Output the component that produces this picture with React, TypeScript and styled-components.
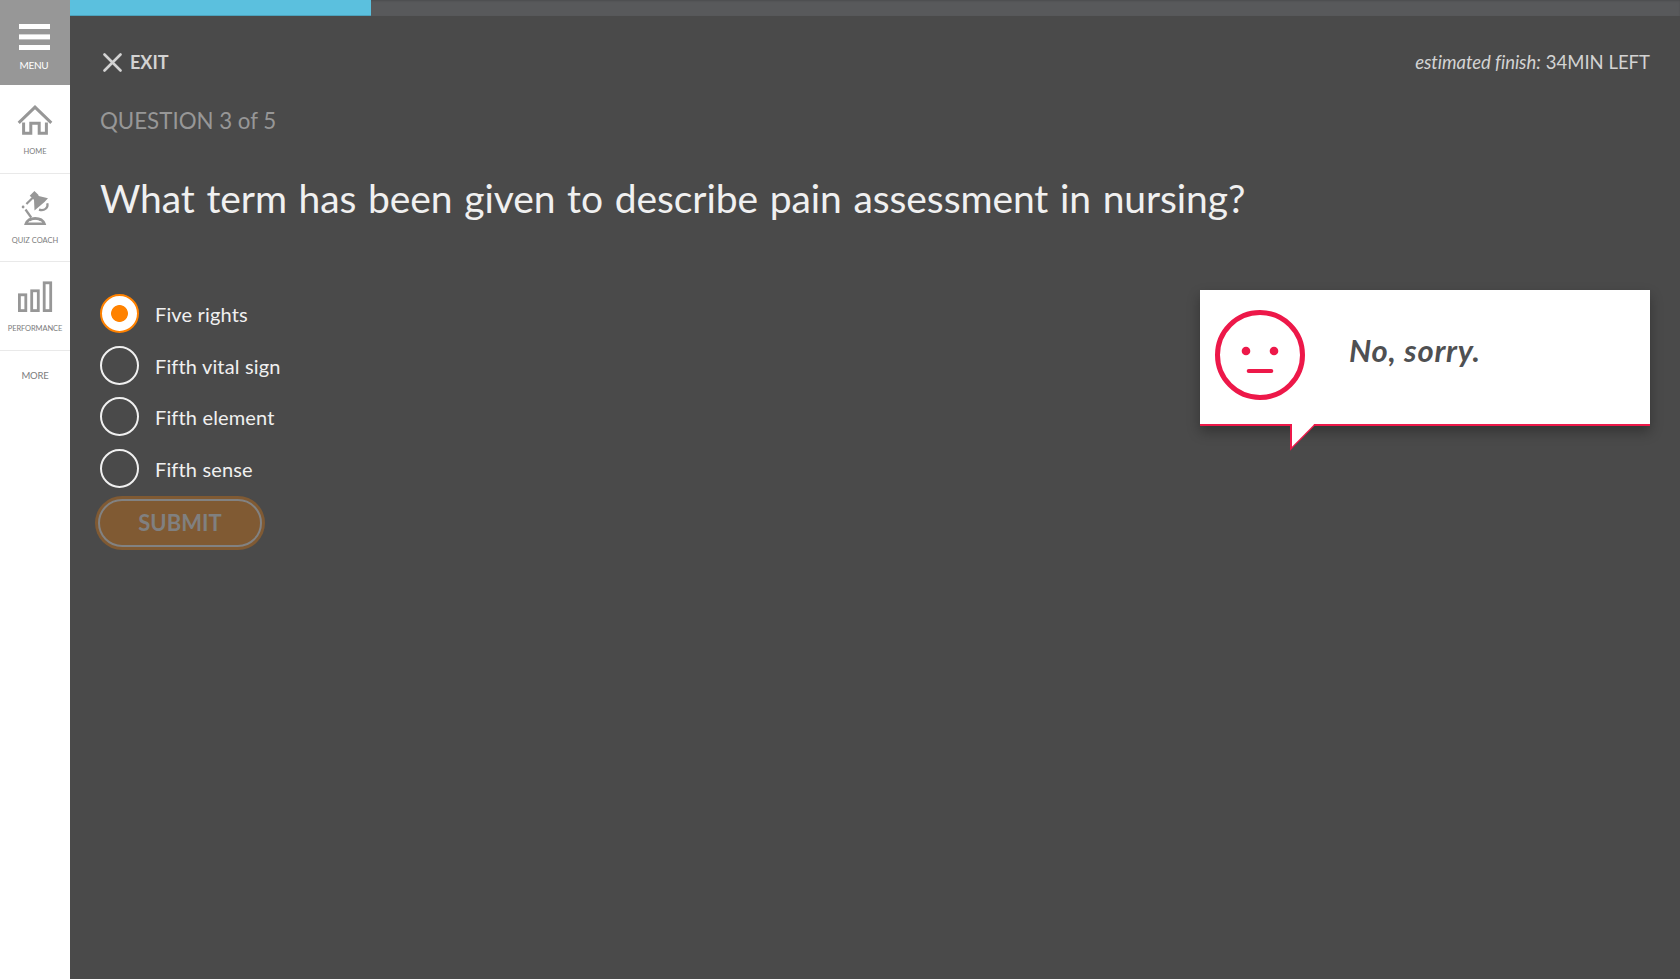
import React, { useState } from 'react';
import styled, { createGlobalStyle } from 'styled-components';

const colors = {
  page: '#4a4a4a',
  grey: '#979797',
  accent: '#ff8200',
  error: '#ed1849',
};

const GlobalStyle = createGlobalStyle`
  *, *::before, *::after { box-sizing: border-box; }
  body {
    margin: 0;
    background: ${colors.page};
    font-family: Lato, "Open Sans", sans-serif;
  }
`;

const Page = styled.div`
  display: flex;
  height: 979px;
  overflow: hidden;
`;

const Sidebar = styled.nav`
  flex: 0 0 70px;
  display: flex;
  flex-direction: column;
  background: #fff;
  color: ${colors.grey};
`;

const MenuButton = styled.button`
  display: flex;
  flex-direction: column;
  align-items: center;
  height: 85px;
  padding: 24px 2px 0 0;
  border: 0;
  background: ${colors.grey};
  color: #fff;
  font: 400 10px/14px Lato, sans-serif;
  letter-spacing: -0.3px;
`;

const Hamburger = styled.svg`
  width: 31px;
  height: 26px;
  margin: 0 0 8px 1px;
`;

const NavItem = styled.a<{ $height: number; $top: number }>`
  display: flex;
  flex-direction: column;
  align-items: center;
  height: ${(p) => p.$height}px;
  padding-top: ${(p) => p.$top}px;
  border-bottom: 1px solid #e9e9e9;
`;

const NavIcon = styled.svg`
  display: block;
  width: 36px;
  flex-shrink: 0;
  fill: none;
  stroke: ${colors.grey};
`;

const NavLabel = styled.span<{ $tight?: boolean }>`
  margin-top: 10px;
  font-size: 7.5px;
  line-height: 10px;
  font-weight: 400;
  white-space: nowrap;
  color: #7c7c7c;
  letter-spacing: ${(p) => (p.$tight ? '-0.1px' : '0')};
`;

const MoreLink = styled.a`
  padding-top: 18px;
  text-align: center;
  font-size: 9.5px;
  line-height: 14px;
  letter-spacing: -0.2px;
  color: #7c7c7c;
`;

const Main = styled.main`
  flex: 1;
  min-width: 0;
  display: flex;
  flex-direction: column;
`;

const Progress = styled.div`
  height: 16px;
  background: #58595b;
  box-shadow: inset 0 1px 2px rgba(0, 0, 0, 0.15);
`;

const ProgressFill = styled.div`
  width: 301px;
  height: 16px;
  background: #5bc0de;
  box-shadow: inset 0 -1px 0 rgba(0, 0, 0, 0.15);
`;

const Content = styled.div`
  padding: 34px 30px 0;
`;

const TopBar = styled.header`
  display: flex;
  justify-content: space-between;
  height: 24px;
  line-height: 24px;
  color: #d3d3d3;
`;

const ExitButton = styled.button`
  display: flex;
  align-items: center;
  gap: 8.5px;
  padding: 0 0 0 2.5px;
  border: 0;
  background: none;
  color: inherit;
  font: 700 18px/24px Lato, sans-serif;
`;

const ExitIcon = styled.svg`
  width: 19px;
  height: 19px;
  fill: none;
  stroke: currentColor;
  stroke-width: 2.6;
  stroke-linecap: round;
`;

const Estimate = styled.div`
  display: flex;
  gap: 5px;
  font-size: 18.5px;
`;

const EstimateLabel = styled.em`
  letter-spacing: -0.05px;
`;

const Counter = styled.div`
  margin-top: 33px;
  font-size: 22.3px;
  line-height: 28px;
  color: ${colors.grey};
`;

const Question = styled.h1`
  margin: 39px 0 0;
  font-size: 39px;
  line-height: 48px;
  font-weight: 400;
  letter-spacing: -0.08px;
  word-spacing: 1.8px;
  color: #f0f0f0;
`;

const Body = styled.div`
  display: flex;
  justify-content: space-between;
  align-items: flex-start;
  margin-top: 68px;
`;

const Form = styled.form`
  padding-top: 4px;
`;

const Options = styled.div`
  display: grid;
  row-gap: 12.67px;
`;

const Option = styled.label`
  display: flex;
  align-items: center;
  gap: 16px;
  height: 39px;
  font-size: 20px;
  line-height: 24px;
  letter-spacing: 0.15px;
  color: #f0f0f0;
`;

const OptionText = styled.span`
  padding-top: 1px;
`;

const Radio = styled.input`
  appearance: none;
  width: 39px;
  height: 39px;
  margin: 0;
  border: 2px solid #f0f0f0;
  border-radius: 50%;

  &:checked {
    border-color: ${colors.accent};
    background: radial-gradient(circle, ${colors.accent} 8px, #fff 8.8px);
  }
`;

const Submit = styled.button`
  display: block;
  width: 164px;
  height: 48px;
  margin: 11px 0 0 -2px;
  padding: 0;
  border: 2px solid #828282;
  border-radius: 24px;
  background: #805a33;
  box-shadow: 0 0 0 3px #805a33;
  color: #808080;
  font: 700 22px/28px Lato, sans-serif;
`;

const Feedback = styled.aside`
  position: relative;
  display: flex;
  align-items: flex-start;
  width: 450px;
  height: 136px;
  padding: 19.5px 15px 0;
  border-bottom: 2px solid ${colors.error};
  background: #fff;
  box-shadow: 0 6px 12px rgba(0, 0, 0, 0.3);
`;

const Face = styled.svg`
  width: 90px;
  height: 90px;
  fill: none;
  stroke: ${colors.error};
`;

const FeedbackText = styled.p`
  margin: 20px 0 0 44px;
  font-size: 31px;
  line-height: 40px;
  font-weight: 700;
  font-style: italic;
  letter-spacing: 0.75px;
  color: #4f5052;
`;

const Tail = styled.svg`
  position: absolute;
  left: 90px;
  top: 134px;
  width: 26px;
  height: 27px;
`;

const answers = ['Five rights', 'Fifth vital sign', 'Fifth element', 'Fifth sense'];

export default function App() {
  const [selected, setSelected] = useState(0);

  return (
    <>
      <GlobalStyle />
      <Page>
        <Sidebar>
          <MenuButton>
            <Hamburger viewBox="0 0 31 26" fill="#fff">
              <rect width="31" height="5" />
              <rect y="10.4" width="31" height="5" />
              <rect y="21" width="31" height="5" />
            </Hamburger>
            MENU
          </MenuButton>
          <NavItem $height={89} $top={20}>
            <NavIcon viewBox="0 0 36 32" height="32" strokeWidth="3">
              <path d="M1.7 17.9 L18 2.2 L34.3 17.9" />
              <path d="M6.6 17.5 V28.2 H13.8 V18.2 H22.2 V28.2 H29.4 V17.5" />
            </NavIcon>
            <NavLabel>HOME</NavLabel>
          </NavItem>
          <NavItem $height={88} $top={16}>
            <NavIcon viewBox="0 0 36 36" height="36" strokeWidth="2.2">
              <path
                d="M12.7 5.7 L17.4 1 L21.3 4.7 L21.7 6 L31 8.3 L27.5 12 L17.5 20.5 L17 10 L15.8 8.4 Z"
                fill={colors.grey}
                stroke="none"
              />
              <path d="M16 7.5 L9.4 14" />
              <circle cx="6.1" cy="17" r="1.4" fill={colors.grey} stroke="none" />
              <path d="M8.5 19.5 L14.2 27.5" />
              <path d="M30.3 13.3 C31.5 17.5 27.5 21.5 22 19.6" />
              <path d="M8.9 33.8 C11.5 26.3 24.8 26.3 27.4 33.8 Z" strokeWidth="2.6" />
              <path d="M12.5 30.8 C15 28.2 21.5 28.2 24 30.8" strokeWidth="1.6" />
            </NavIcon>
            <NavLabel>QUIZ COACH</NavLabel>
          </NavItem>
          <NavItem $height={89} $top={18}>
            <NavIcon viewBox="0 0 36 34" height="34" strokeWidth="2.8">
              <rect x="2.4" y="14.8" width="6.4" height="15.8" />
              <rect x="14.7" y="10.8" width="6.6" height="19.8" />
              <rect x="27.2" y="2.8" width="6.5" height="27.8" />
            </NavIcon>
            <NavLabel $tight>PERFORMANCE</NavLabel>
          </NavItem>
          <MoreLink>MORE</MoreLink>
        </Sidebar>

        <Main>
          <Progress>
            <ProgressFill />
          </Progress>
          <Content>
            <TopBar>
              <ExitButton>
                <ExitIcon viewBox="0 0 19 19">
                  <path d="M1.5 1.5 L17.5 17.5 M17.5 1.5 L1.5 17.5" />
                </ExitIcon>
                EXIT
              </ExitButton>
              <Estimate>
                <EstimateLabel>estimated finish:</EstimateLabel>
                <span>34MIN LEFT</span>
              </Estimate>
            </TopBar>
            <Counter>QUESTION 3 of 5</Counter>
            <Question>What term has been given to describe pain assessment in nursing?</Question>
            <Body>
              <Form onSubmit={(e) => e.preventDefault()}>
                <Options>
                  {answers.map((answer, i) => (
                    <Option key={answer}>
                      <Radio
                        type="radio"
                        name="answer"
                        checked={selected === i}
                        onChange={() => setSelected(i)}
                      />
                      <OptionText>{answer}</OptionText>
                    </Option>
                  ))}
                </Options>
                <Submit disabled>SUBMIT</Submit>
              </Form>
              <Feedback>
                <Face viewBox="0 0 90 90">
                  <circle cx="45" cy="45" r="42.5" strokeWidth="5" />
                  <circle cx="31" cy="41" r="4.3" fill={colors.error} stroke="none" />
                  <circle cx="59" cy="41" r="4.3" fill={colors.error} stroke="none" />
                  <path d="M33.7 61 H56.3" strokeWidth="4" strokeLinecap="round" />
                </Face>
                <FeedbackText>No, sorry.</FeedbackText>
                <Tail viewBox="0 0 26 27">
                  <path d="M0 0 H26 L24.5 2 L0 26.8 Z" fill={colors.error} />
                  <path d="M2 0 H24 L23.5 1 L2 22.8 Z" fill="#fff" />
                </Tail>
              </Feedback>
            </Body>
          </Content>
        </Main>
      </Page>
    </>
  );
}
